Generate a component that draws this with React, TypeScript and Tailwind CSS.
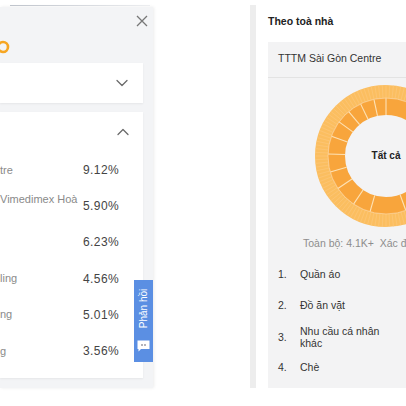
import React from "react";

const rows = [
  { label: "tre", pct: "9.12%" },
  { label: "Vimedimex Hoà", pct: "5.90%", two: true },
  { label: "", pct: "6.23%" },
  { label: "ling", pct: "4.56%" },
  { label: "ng", pct: "5.01%" },
  { label: "g", pct: "3.56%" },
];

const items = [
  { n: "1.", t: "Quần áo", h: "h-[31px]" },
  { n: "2.", t: "Đồ ăn vặt", h: "h-[31px]" },
  { n: "3.", t: "Nhu cầu cá nhân khác", h: "h-[33px]" },
  { n: "4.", t: "Chè", h: "h-[28px]" },
];

const innerCuts = [0, 38, 72, 104, 128, 160, 196, 214, 236, 254, 272, 290, 306, 320, 334, 348];

function Donut() {
  const c = 73;
  const pt = (r: number, deg: number) => {
    const a = ((deg - 90) * Math.PI) / 180;
    return [c + r * Math.cos(a), c + r * Math.sin(a)];
  };
  const outer = Array.from({ length: 120 }, (_, i) => i * 3);
  return (
    <svg width="146" height="146" viewBox="0 0 146 146">
      <circle cx={c} cy={c} r={64.5} fill="none" stroke="#fbbe60" strokeWidth={13} />
      <circle cx={c} cy={c} r={49.5} fill="none" stroke="#f8a53c" strokeWidth={17} />
      {outer.map((d) => {
        const [x1, y1] = pt(58, d);
        const [x2, y2] = pt(71, d);
        return <line key={d} x1={x1} y1={y1} x2={x2} y2={y2} stroke="#fccb85" strokeWidth={0.5} />;
      })}
      {innerCuts.map((d) => {
        const [x1, y1] = pt(41, d);
        const [x2, y2] = pt(58, d);
        return <line key={d} x1={x1} y1={y1} x2={x2} y2={y2} stroke="#fde2b6" strokeWidth={1.1} />;
      })}
      <circle cx={c} cy={c} r={58} fill="none" stroke="#fcd398" strokeWidth={0.8} />
    </svg>
  );
}

function Chevron({ up }: { up?: boolean }) {
  return (
    <svg width="12" height="8" viewBox="0 0 12 8" className={up ? "rotate-180" : ""}>
      <path d="M1 1.5 L6 6.5 L11 1.5" fill="none" stroke="#6b6b6b" strokeWidth="1.3" strokeLinecap="round" strokeLinejoin="round" />
    </svg>
  );
}

export default function App() {
  return (
    <div
      className="relative flex h-[406px] w-[406px] overflow-hidden bg-white"
      style={{ fontFamily: '"Liberation Sans", "Noto Sans", sans-serif' }}
    >
      <div className="absolute left-[10px] top-[5px] h-px w-[140px] bg-gradient-to-r from-gray-400 to-gray-200 opacity-60" />

      {/* left panel */}
      <div className="relative mt-[7px] h-[381px] w-[153px] shrink-0 bg-[#f3f4f6] shadow-[1px_0_3px_rgba(0,0,0,0.08)]">
        <svg className="absolute right-[5px] top-[8px]" width="12" height="12" viewBox="0 0 12 12">
          <path d="M1 1 L11 11 M11 1 L1 11" stroke="#777" strokeWidth="1.3" />
        </svg>
        <svg className="absolute left-[-4px] top-[33px]" width="14" height="14" viewBox="0 0 14 14">
          <circle cx="7" cy="7" r="5" fill="none" stroke="#f6a623" strokeWidth="2.6" />
        </svg>

        <div className="mt-[56px] flex h-[40px] w-[143px] items-center justify-end bg-white pr-[15px] shadow-[0_1px_2px_rgba(0,0,0,0.06)]">
          <Chevron />
        </div>

        <div className="mt-[9px] h-[266px] w-[143px] bg-white shadow-[0_1px_2px_rgba(0,0,0,0.06)]">
          <div className="flex h-[40px] items-center justify-end pr-[14px]">
            <Chevron up />
          </div>
          <div className="flex flex-col">
            {rows.map((r, i) => (
              <div key={i} className="flex h-[36.2px] items-center">
                <div className="w-[83px] text-[11px] leading-[13px] text-[#8a8a8a]">
                  {r.label}
                  {r.two && <br />}
                  {r.two && "\u00a0"}
                </div>
                <div className="text-[12px] tracking-[0.4px] text-[#444]">{r.pct}</div>
              </div>
            ))}
          </div>
        </div>

        <div className="absolute left-[134px] top-[273px] flex h-[82px] w-[19px] flex-col items-center bg-[#5b8fe3]">
          <div className="mt-[6px] flex h-[44px] items-center justify-center">
            <span className="-rotate-90 whitespace-nowrap text-[10px] text-white">Phản hồi</span>
          </div>
          <svg className="mt-[10px]" width="13" height="12" viewBox="0 0 13 12">
            <path d="M0.5 0.5 H12.5 V9 H4 L1.5 11.5 V9 H0.5 Z" fill="#fff" />
            <circle cx="5" cy="5" r="0.8" fill="#556" />
            <circle cx="8" cy="5" r="0.8" fill="#556" />
          </svg>
        </div>
      </div>

      {/* right panel */}
      <div className="ml-[97px] mt-[5px] h-[383px] w-[150px] shrink-0 border-l-[6px] border-[#ededed] pl-[12px]">
        <div className="pt-[9px] text-[10.5px] font-bold text-[#222]">Theo toà nhà</div>
        <div className="mt-[12px] w-[236px] bg-[#f3f3f4] pb-[6px]">
          <div className="flex h-[36px] items-center border-b border-[#e3e3e3] pl-[10px] text-[10.5px] text-[#333]">
            TTTM Sài Gòn Centre
          </div>
          <div className="relative mx-auto mt-[5px] h-[146px] w-[146px]">
            <Donut />
            <div className="absolute inset-0 flex items-center justify-center text-[10px] font-bold text-[#222]">
              Tất cả
            </div>
          </div>
          <div className="mt-[7px] whitespace-nowrap pl-[35px] text-[10.5px] text-[#8d8d8d]">
            Toàn bộ: 4.1K+&nbsp;&nbsp;Xác định: 2.3K+
          </div>
          <div className="mt-[7px] flex flex-col pl-[10px]">
            {items.map((it) => (
              <div key={it.n} className={`flex ${it.h} items-center text-[10.5px] leading-[12.5px] text-[#333]`}>
                <span className="w-[22px]">{it.n}</span>
                <span className="w-[92px]">{it.t}</span>
              </div>
            ))}
          </div>
        </div>
      </div>
    </div>
  );
}
